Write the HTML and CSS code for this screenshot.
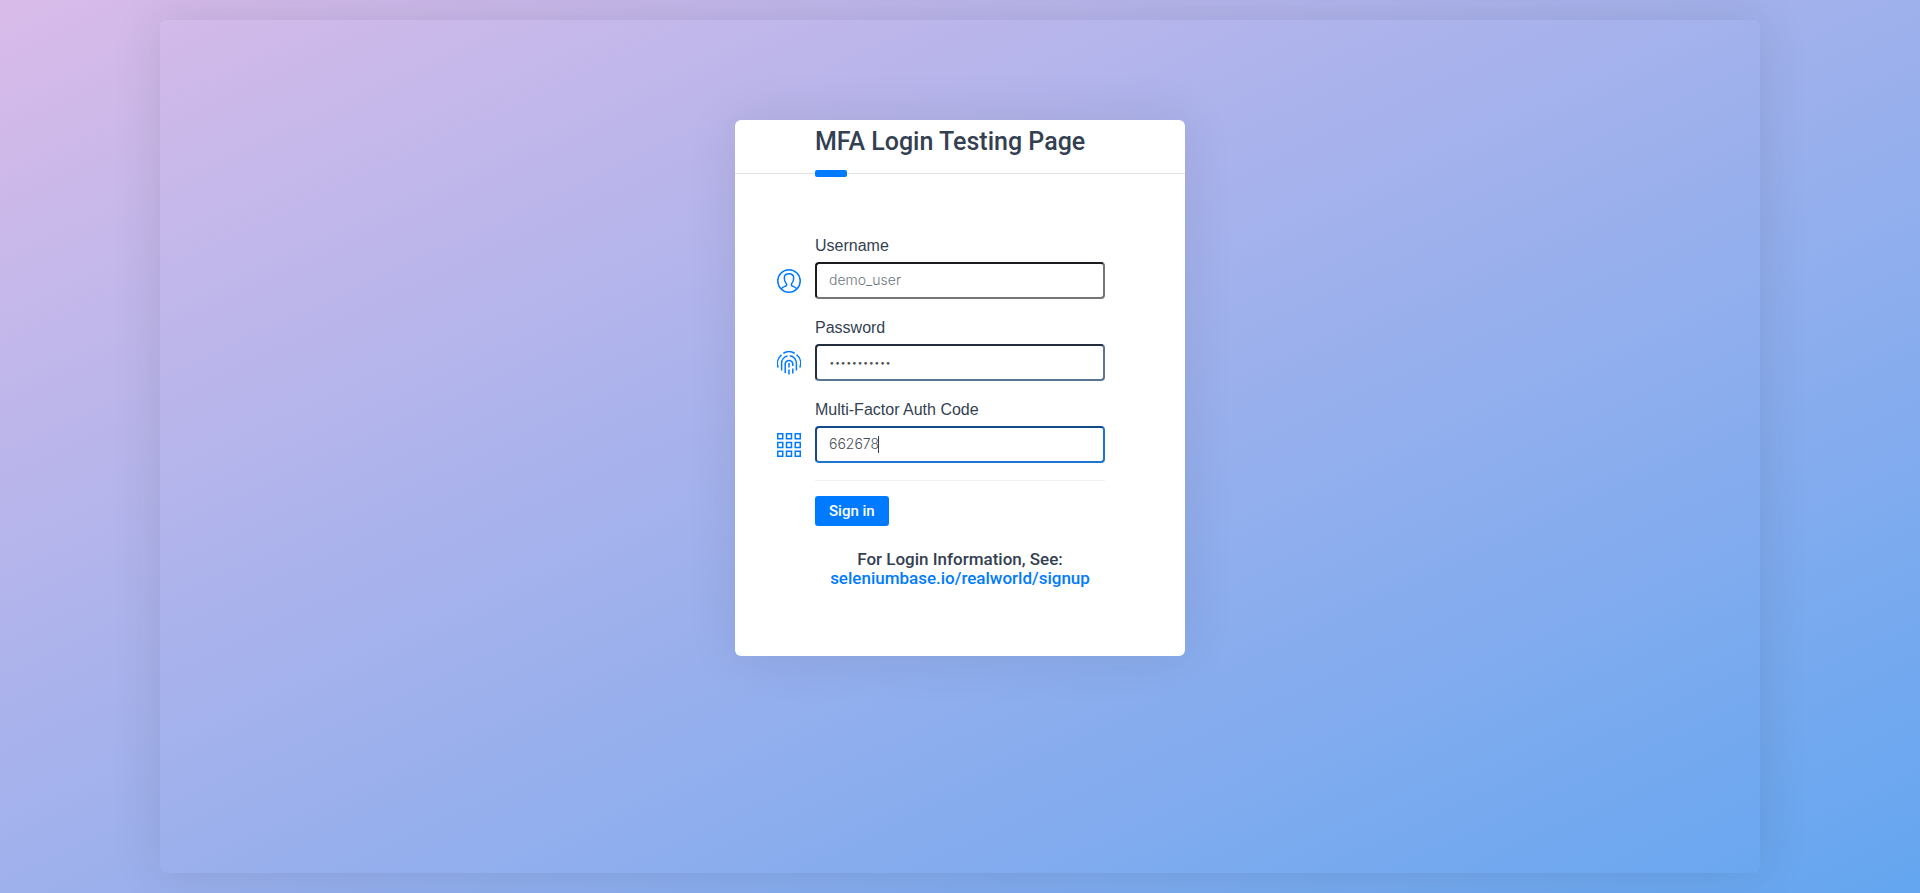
FILE: index.html
```html
<!DOCTYPE html>
<html lang="en">
<head>
<meta charset="utf-8">
<title>MFA Login Testing Page</title>
<meta name="viewport" content="width=device-width, initial-scale=1">
<link rel="stylesheet" href="styles.css">
</head>
<body>
<main class="stage">
  <section class="card">
    <header class="card-header"><h1 class="title">MFA Login Testing Page</h1></header>
    <form class="form">
      <div class="row">
        <svg class="icon" viewBox="0 0 24 24" aria-hidden="true"><circle cx="12" cy="12" r="11.2"/><path d="M4.200 20c.8-1.500 2.200-2.100 3.700-2.600 2.200-.7 2-2 1.300-3C7.900 12.900 7.300 11 7.300 9c0-2.800 1.800-4.300 4.700-4.300S16.700 6.200 16.700 9c0 2-.6 3.900-1.900 5.400-.7 1-.9 2.300 1.300 3 1.500.5 2.900 1.100 3.700 2.600"/></svg>
        <div class="field">
          <label class="label" for="username">Username</label>
          <input class="input input-user" id="username" type="text" value="demo_user">
        </div>
      </div>
      <div class="row">
        <svg class="icon" viewBox="0 0 24 24" aria-hidden="true"><path d="M1.200 16.500A11.200 11.200 0 0 1 4.500 3.800M6.300 2.300A11.200 11.200 0 0 1 17.700 2.300M19.500 3.600A11.200 11.200 0 0 1 22.800 16.500M4.600 19.500V12.500A7.500 7.500 0 0 1 10.500 4.900M12.700 4.800A7.500 7.500 0 0 1 19.400 12.500V19.500M8.200 22V12.500A3.900 3.900 0 0 1 15.800 12.500V15M15.800 17.500V22.500M12 12V16.500M12 18.500V23.500"/></svg>
        <div class="field">
          <label class="label" for="password">Password</label>
          <input class="input input-pass" id="password" type="password" value="secret_pass">
        </div>
      </div>
      <div class="row">
        <svg class="icon" viewBox="0 0 24 24" aria-hidden="true"><path d="M.75.75h5v5h-5zM9.500.75h5v5h-5zM18.250.75h5v5h-5zM.75 9.500h5v5h-5zM9.500 9.500h5v5h-5zM18.250 9.500h5v5h-5zM.75 18.250h5v5h-5zM9.500 18.250h5v5h-5zM18.250 18.250h5v5h-5z"/></svg>
        <div class="field">
          <label class="label" for="code">Multi-Factor Auth Code</label>
          <input class="input input-code" id="code" type="text" value="662678">
          <span class="caret"></span>
        </div>
      </div>
      <div class="actions">
        <button class="button" type="button">Sign in</button>
      </div>
    </form>
    <p class="info">For Login Information, See:<br><a class="link" href="https://seleniumbase.io/realworld/signup">seleniumbase.io/realworld/signup</a></p>
  </section>
</main>
</body>
</html>
```
FILE: styles.css
```css
* { box-sizing: border-box; }

body {
  margin: 0;
  min-height: 100vh;
  display: flex;
  padding: 20px;
  background: linear-gradient(to bottom right, #d9bbe9, #64a6f0);
  color: #343f52;
  font: 17px/19px Roboto, sans-serif;
}

.stage {
  flex: 1;
  max-width: 1600px;
  margin: 0 auto;
  padding: 100px 20px;
  border-radius: 6px;
  box-shadow: 0 0 50px rgba(30, 34, 40, 0.12);
}

.card {
  max-width: 450px;
  margin: 0 auto;
  padding-bottom: 68px;
  background: #fff;
  border-radius: 6px;
  box-shadow: 0 0 50px rgba(30, 34, 40, 0.1);
}

.card-header {
  position: relative;
  padding: 6px 20px 15px 80px;
  border-bottom: 1px solid #e2e3e5;
}

.card-header::after {
  content: "";
  position: absolute;
  left: 80px;
  bottom: -4px;
  width: 32px;
  height: 7px;
  border-radius: 2px;
  background: #007bff;
}

.title {
  margin: 0;
  font-size: 25px;
  font-weight: 500;
  line-height: 32px;
}

.form { padding: 60px 80px 0 42px; }

.row {
  display: flex;
  align-items: flex-end;
  gap: 14px;
  margin-bottom: 17px;
}

.icon {
  flex: none;
  width: 24px;
  height: 24px;
  margin-bottom: 6px;
  fill: none;
  stroke: #007bff;
  stroke-width: 1.5;
}

.field { position: relative; flex: 1; min-width: 0; }

.label {
  display: block;
  margin-bottom: 4px;
  font: 16px/24px "Liberation Sans", Arial, sans-serif;
}

.input {
  display: block;
  width: 100%;
  height: 37px;
  padding: 0 12px 2px;
  border: 2px solid;
  border-radius: 4px;
  background: #fff;
  color: #4c5057;
  font: 300 14px/20px Inter, sans-serif;
  outline: none;
}

.input-user { border-color: #1c1b1f #767676 #767676 #1c1b1f; color: #6c757d; }
.input-pass { border-color: #222e3e #5b7593 #5b7593 #222e3e; font-size: 10px; }
.input-code { border-color: #124b88 #1d76d2 #1d76d2 #124b88; }

.caret {
  position: absolute;
  left: 63px;
  bottom: 10px;
  width: 1px;
  height: 17px;
  background: #343f52;
}

.actions {
  margin-left: 38px;
  padding-top: 15px;
  border-top: 1px solid #f0f0f0;
}

.button {
  display: block;
  height: 30px;
  padding: 0 14px;
  border: 0;
  border-radius: 3px;
  background: #007bff;
  color: #fff;
  font: 500 15px/20px Roboto, sans-serif;
}

.info {
  margin: 24px 0 0;
  text-align: center;
  font-weight: 500;
}

.link { color: #007bff; text-decoration: none; }
```
